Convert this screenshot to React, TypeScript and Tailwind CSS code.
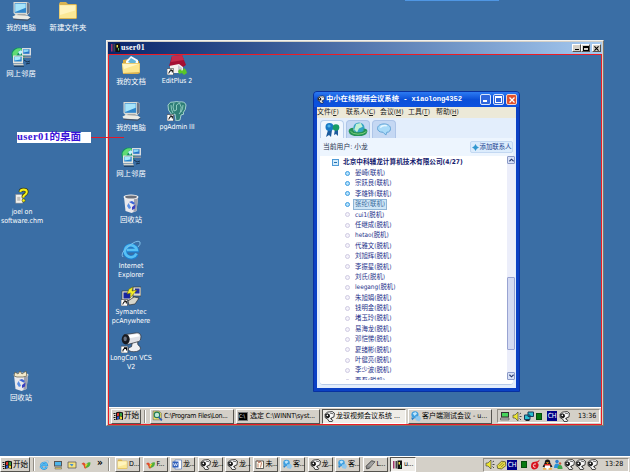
import React from "react";

type P = { className?: string };
type Kids = { children: React.ReactNode };

const Computer = ({ className = "w-[21px] h-5" }: P) => (
  <svg viewBox="0 0 20 20" className={className}>
    <path d="M2 1h13l3 1v10l-2 2H4l-2-2z" fill="#dcdcd4" />
    <path d="M15.500 1.500l2.500 1v9l-2.500 2z" fill="#6f7686" />
    <rect x="3.200" y="2.200" width="11.500" height="9.600" fill="#2f86cc" />
    <path d="M3.700 2.700h10.500v4L3.700 11z" fill="#a5e4fb" />
    <path d="M6 13.500h8l1 2H6z" fill="#77797c" />
    <path d="M1 15.500l3-1.500 12 .5 3 2-3 2-14-1z" fill="#ecebe3" />
    <path d="M2 17.800l14 1 3-2v1l-3 2-14-1z" fill="#4b525f" />
  </svg>
);

const Network = ({ className = "w-5 h-5" }: P) => (
  <svg viewBox="0 0 20 20" className={className}>
    <circle cx="7.500" cy="7.500" r="7" fill="#129063" />
    <path d="M1.500 6c2-5 8-6 10-3.500L8 4 6 8 2 11z" fill="#5fdc74" />
    <path d="M7 5l3-2 2 2-3 3z" fill="#bff3fa" />
    <path d="M11 1h9v7.500h-9z" fill="#d9dde0" />
    <path d="M12.200 2.200h6.300v4.600h-6.300z" fill="#2475c9" />
    <path d="M12.500 2.500h5v2l-5 1z" fill="#8bd7f6" />
    <path d="M12 9.500h8v1.500h-8z" fill="#8c939b" />
    <path d="M2 8.500h10V16H2z" fill="#e5e5df" />
    <path d="M3.200 9.700h7.500v4.800H3.200z" fill="#2785cc" />
    <path d="M3.500 10h6v2.500l-6 1z" fill="#a4e8fb" />
    <path d="M2 16.500h10l1 2H3z" fill="#d5d4ca" />
    <path d="M3 19.200h10M13 13l3 2 3-1M15 17l4-1" stroke="#17324f" strokeWidth="1" fill="none" />
  </svg>
);

const Folder = ({ className = "w-5 h-5" }: P) => (
  <svg viewBox="0 0 20 20" className={className}>
    <path d="M1 3l1-2h6l2 2h8l1 1v13l-1 1H1z" fill="#d9b452" />
    <path d="M1.500 4h16.500v13H1.500z" fill="#fbe896" />
    <path d="M2 4.500h15v5L2 14z" fill="#fff4bd" />
  </svg>
);

const DocsFolder = ({ className = "w-5 h-5" }: P) => (
  <svg viewBox="0 0 20 20" className={className}>
    <path d="M2 5l5-1 2 2h9v12H2z" fill="#d8ab41" />
    <path d="M5 6l5-5 7 4v7H5z" fill="#f7fbff" />
    <path d="M7 7l3-4 5 3-1 4z" fill="#62b4d8" />
    <path d="M1 8h18v10l-2 1H2z" fill="#d8b251" />
    <path d="M1 8.500h17.500V17L2 18z" fill="#fbe68e" />
    <path d="M1.500 9h16L3 14z" fill="#fff6c5" />
  </svg>
);

const Bin = ({ className = "w-5 h-5", full = false }: P & { full?: boolean }) => (
  <svg viewBox="0 0 20 20" className={className}>
    <path d="M3 4l14 1-1.500 13-5 2-6-2z" fill="#e9e9ed" />
    <path d="M13 6l4-1-1.500 13-3 1z" fill="#9ea0ae" />
    <ellipse cx="10" cy="4" rx="7.500" ry="2.500" fill="#f3f3f3" />
    <ellipse cx="10" cy="4" rx="6" ry="1.600" fill="#6a6f7a" />
    {full && <path d="M3 5l1-4 3 2 2-3 2 3 4-3 1 5-4 1H6z" fill="#f2e9cc" stroke="#55523f" strokeWidth=".7" />}
    <path d="M8 9l3-1 3 2-1.500 1.500z" fill="#3a62d8" />
    <path d="M14.500 11.500l-.5 4-3 1.500V14z" fill="#3a3fc0" />
    <path d="M8 16l-2-3 1.500-3 1.500 2.500 1 2.500z" fill="#5a8fe6" />
  </svg>
);

const HelpFile = ({ className = "w-5 h-5" }: P) => (
  <svg viewBox="0 0 20 20" className={className}>
    <path d="M2 8h9v11H2z" fill="#f4f3ee" stroke="#7a7a7a" strokeWidth=".6" />
    <path d="M4 11h4v5H4z" fill="#c2c1bd" />
    <path d="M8 5q0-3 4-3t4 3q0 2-2.500 3.500T12 12" fill="none" stroke="#37370c" strokeWidth="4.400" />
    <path d="M8 5q0-3 4-3t4 3q0 2-2.500 3.500T12 12" fill="none" stroke="#f4f01b" strokeWidth="2.600" />
    <circle cx="12" cy="15.500" r="2" fill="#f4f01b" stroke="#37370c" strokeWidth=".7" />
  </svg>
);

const Shortcut = () => (
  <g>
    <path d="M0 13.500h6.500V20H0z" fill="#fff" stroke="#222" strokeWidth=".5" />
    <path d="M1.800 18.500q0-3 3-3M2.800 15h2.500v2.500" fill="none" stroke="#000" strokeWidth="1" />
  </g>
);

const EditPlus = ({ className = "w-5 h-5" }: P) => (
  <svg viewBox="0 0 20 20" className={className}>
    <path d="M3 9h13v9H3z" fill="#f3f0ee" />
    <path d="M5 1l10-1 4 10-3 2-4-3-10 2z" fill="#a50f33" />
    <path d="M5 1l10-1 2 5-13 2z" fill="#c42b4b" />
    <path d="M11 10l4 3v5h-4z" fill="#c9c9d2" />
    <path d="M11 16l2-2 2 2 2-3 2 2 1 3-3 2-2-2-3 1z" fill="#59c52a" />
    <Shortcut />
  </svg>
);

const Elephant = ({ className = "w-5 h-5" }: P) => (
  <svg viewBox="0 0 20 20" className={className}>
    <path d="M1 4q2-4 6-3 3-1 5 0 6-1 7 3 0 5-3 8l1 1-3 1-1 5-4 1-1-7-3 1Q0 9 1 4z" fill="#2f7f78" stroke="#bfe6de" strokeWidth=".8" />
    <path d="M7 2q-2 4 0 8l2.500-1V4l3-2q3 4 1 9l-1.500 2M4 4q0 5 2 8M16 4q0 4-2 7" fill="none" stroke="#a5dccf" strokeWidth=".8" />
    <Shortcut />
  </svg>
);

const Explorer = ({ className = "w-5 h-5" }: P) => (
  <svg viewBox="0 0 20 20" className={className}>
    <path d="M15.500 14A6 6 0 1 1 16 10.500H6" fill="none" stroke="#1c7fd0" strokeWidth="4.200" />
    <path d="M15.500 13.500A6 6 0 1 1 15.800 10H6" fill="none" stroke="#56c0f5" strokeWidth="2.600" />
    <path d="M2 17Q-1 14 6 7.500 16-1 19 2q1 2-2 5" fill="none" stroke="#7fbde8" strokeWidth="1" />
  </svg>
);

const Symantec = ({ className = "w-5 h-5" }: P) => (
  <svg viewBox="0 0 20 20" className={className}>
    <path d="M1 5h11v9H1z" fill="#e2e2d8" stroke="#333" strokeWidth=".6" />
    <path d="M2.500 6.500h6.500v6H2.500z" fill="#17249f" />
    <path d="M12 1h8v9h-8z" fill="#dadace" stroke="#333" strokeWidth=".6" />
    <path d="M14 2.500h4.500v5H14z" fill="#2531a6" />
    <path d="M8 3l4-2-1 4 5-1-7 8 1-5-4 1z" fill="#f6ef26" stroke="#55540c" strokeWidth=".5" />
    <path d="M7 15l6-4 5 1-4 6-6 1z" fill="#d5d5cb" stroke="#222" strokeWidth=".6" />
    <Shortcut />
  </svg>
);

const Camera = ({ className = "w-[21px] h-[21px]" }: P) => (
  <svg viewBox="0 0 20 20" className={className}>
    <path d="M11 9h5q-1 3 2 5 2 3-3 4.500-6 1-8-1.500-1-2 3-3z" fill="#eff0f3" stroke="#30343c" strokeWidth=".7" />
    <path d="M3 2.500L15 .8q4 0 4 3.700 0 4-2 4.500L6 12z" fill="#dfe1e7" stroke="#30343c" strokeWidth=".7" />
    <path d="M5 3.500l11-1.800 2 2.300L8 6z" fill="#fff" />
    <ellipse cx="4.500" cy="7" rx="3.800" ry="4.800" fill="#181b22" />
    <ellipse cx="4" cy="6.500" rx="1.600" ry="2.200" fill="#6b7280" />
    <Shortcut />
  </svg>
);

const Conference = ({ className = "w-[11px] h-[11px]" }: P) => (
  <svg viewBox="0 0 20 20" className={className}>
    <path d="M2 6l4-4 9-1 4 3-1 7-4 1-1 3 3 2-1 2H9l-2-4-5-3z" fill="#f8f8f8" stroke="#111" strokeWidth="1.400" />
    <path d="M2 6l4-2 4 2 1 4-3 3-5-1z" fill="#151515" />
    <circle cx="6" cy="8" r="1.500" fill="#fff" />
    <path d="M11 4l6 1M11 13l3 2" stroke="#333" strokeWidth="1.300" fill="none" />
  </svg>
);

const Bubbles = ({ className = "w-[11px] h-[11px]" }: P) => (
  <svg viewBox="0 0 20 20" className={className}>
    <circle cx="9" cy="7" r="6.500" fill="#3c9ee0" />
    <path d="M5 4l5-2 3 3-5 4z" fill="#bfe5fb" />
    <path d="M10 10l8-1 2 5-3 5-7-2z" fill="#8ec7ee" />
    <path d="M2 12l6 1-4 4z" fill="#2c7ec4" />
  </svg>
);

const WinFlag = () => (
  <svg viewBox="0 0 20 20" className="w-[11px] h-[10px] shrink-0">
    <path d="M5 3q6-3 14 0v15q-7-3-14 0z" fill="#111" />
    <path d="M7 4.500q2-1 4-1v6q-2 0-4 1z" fill="#e0322a" />
    <path d="M12.500 3.500q2 0 4.500 1v6q-2-1-4.500-1z" fill="#35a341" />
    <path d="M7 11.500q2-1 4-1v5q-2 0-4 1z" fill="#2a55d4" />
    <path d="M12.500 10.500q2 0 4.500 1v5q-2-1-4.500-1z" fill="#f2d52b" />
    <path d="M0 4h4v2H0zM1 8h3v2H1zM0 12h4v2H0zM1 16h3v2H1z" fill="#111" />
  </svg>
);

const Speaker = () => (
  <svg viewBox="0 0 20 20" className="w-[10px] h-[11px]">
    <path d="M2 7h4l6-6v18l-6-6H2z" fill="#ede632" stroke="#333" strokeWidth="1.200" />
    <path d="M15 5l3-2M15 10h4M15 14l3 3" stroke="#222" strokeWidth="1.600" />
  </svg>
);

const GreenBox = () => <div className="w-[6px] h-[7px] bg-[#087a12] border border-[#064d0c]" />;
const Lang = () => <div className="w-[10px] h-[10px] bg-[#000087] text-white text-[7px] leading-[10px] text-center tracking-[-0.4px]">CH</div>;

const PcTray = () => (
  <svg viewBox="0 0 20 20" className="w-[10px] h-[10px]">
    <path d="M2 2h16v11H2z" fill="#333" />
    <path d="M4 4h12v7H4z" fill="#46d45b" />
    <path d="M1 14h17v4H1z" fill="#bbb" stroke="#333" />
  </svg>
);
const Screens = () => (
  <svg viewBox="0 0 20 20" className="w-[10px] h-[10px]">
    <path d="M8 2h11v9H8zM1 8h11v9H1z" fill="#28bfd1" stroke="#153b5c" strokeWidth="2" />
    <path d="M3 19h8" stroke="#222" strokeWidth="2" />
  </svg>
);
const Swirl = () => (
  <svg viewBox="0 0 20 20" className="w-[11px] h-[11px]">
    <path d="M18 1q-2 5-5 6 4 2 2 7-2 5-8 5-6-1-5-8 1-6 7-6 5 0 9-4z" fill="#d8121d" />
    <path d="M11 9q-5-1-5 3t4 3" fill="none" stroke="#f7dada" strokeWidth="1.800" />
  </svg>
);
const Penguin = () => (
  <svg viewBox="0 0 20 20" className="w-[11px] h-[11px]">
    <path d="M10 1q5 0 5 6l4 7-3 1H4l-3-1 4-7q0-6 5-6z" fill="#151515" />
    <ellipse cx="10" cy="14" rx="5" ry="5" fill="#fff" />
    <path d="M4 9h12l-1 3H5z" fill="#e02a20" />
    <path d="M7 6h6l-3 3zM2 17h6v2H2zM12 17h6v2h-6z" fill="#f5a21b" />
  </svg>
);
const Buddy = () => (
  <svg viewBox="0 0 20 20" className="w-[10px] h-[11px]">
    <circle cx="8" cy="4" r="3.500" fill="#2b7bd0" />
    <path d="M2 17q0-9 6-9t6 9z" fill="#2b93d9" />
    <circle cx="14" cy="8" r="2.500" fill="#c95a3a" />
    <path d="M9 19q0-8 5-8t5 8z" fill="#3fa54b" />
  </svg>
);
const Pen = () => (
  <svg viewBox="0 0 20 20" className="w-[11px] h-[11px]">
    <path d="M2 12l8-8 7 1 1 7-8 6-7-1z" fill="#e9e04a" stroke="#55501c" strokeWidth="1.400" />
    <path d="M6 13l7-7M9 15l6-6" stroke="#7c7422" strokeWidth="1.500" />
  </svg>
);
const Swoosh = ({ className = "w-[10px] h-[10px]" }: P) => (
  <svg viewBox="0 0 20 20" className={className}>
    <path d="M1 8q4-6 8 0t2 8q-5 3-5-3-1-5-5-5z" fill="#e04a2c" />
    <path d="M8 13q4-10 11-8 0 8-6 10-3 1-5-2z" fill="#4fae3a" />
    <path d="M8 9l6-2-5 8z" fill="#f3d12f" />
  </svg>
);
const SearchDoc = () => (
  <svg viewBox="0 0 20 20" className="w-[11px] h-[12px] shrink-0">
    <path d="M2 1h11l4 4v12H2z" fill="#f3e36a" stroke="#555" strokeWidth="1" />
    <circle cx="9" cy="8" r="5" fill="#bfe8d9" stroke="#237b55" strokeWidth="2" />
    <path d="M12 12l6 6" stroke="#2a5bb9" strokeWidth="3" />
  </svg>
);
const WordDoc = () => (
  <svg viewBox="0 0 20 20" className="w-[10px] h-[11px] shrink-0">
    <path d="M6 1h13v18H6z" fill="#fff" stroke="#2b54a8" />
    <path d="M1 4h12v12H1z" fill="#2e5fbd" />
    <path d="M3 7l2 6 2-5 2 5 2-6" fill="none" stroke="#fff" strokeWidth="1.400" />
  </svg>
);
const Notes = () => (
  <svg viewBox="0 0 20 20" className="w-[10px] h-[11px] shrink-0">
    <path d="M2 3h15v15H2z" fill="#fffef0" stroke="#333" strokeWidth="1.500" />
    <path d="M5 2l3 5 2-4 3 4-2 9M6 8v8" stroke="#a3432b" strokeWidth="1.400" fill="none" />
  </svg>
);
const Plug = () => (
  <svg viewBox="0 0 20 20" className="w-[11px] h-[11px] shrink-0">
    <path d="M2 13L12 3l6 2-10 12-5 1z" fill="#888" stroke="#333" strokeWidth="1.300" />
    <path d="M6 13l8-8M9 14l7-8" stroke="#ddd" />
  </svg>
);
const Remote = () => (
  <svg viewBox="0 0 20 20" className="w-[11px] h-[10px] shrink-0">
    <path d="M1 2h3v15H1z" fill="#a0346c" />
    <path d="M6 2h3v15H6z" fill="#444" />
    <path d="M10 1h9v17h-9z" fill="#111" />
    <path d="M12 4h3v5h-3z" fill="#e9d84a" />
    <path d="M15 10h2v5h-2z" fill="#53b56a" />
  </svg>
);

function DesktopIcon({ place, label, latin, children }: Kids & { place: string; label: string[]; latin?: boolean }) {
  return (
    <div className={`absolute w-[60px] flex flex-col items-center ${place}`}>
      <div className="h-[22px] flex items-center">{children}</div>
      <div className={`mt-px text-center leading-[9px] text-white whitespace-nowrap ${latin ? "text-[7px] tracking-[-0.05px]" : "text-[7.4px]"}`}>
        {label.map((l) => (
          <div key={l}>{l}</div>
        ))}
      </div>
    </div>
  );
}

const raised = "border border-t-white border-l-white border-r-[#55534e] border-b-[#55534e] bg-[#d4d0c8]";
const pressed = "border border-t-[#55534e] border-l-[#55534e] border-r-white border-b-white bg-[#efede8]";
const sunken = "border border-t-[#918d85] border-l-[#918d85] border-r-white border-b-white";

function StartButton() {
  return (
    <div className={`flex items-center w-[30px] h-[15px] pl-px text-[7.6px] leading-none whitespace-nowrap shrink-0 ${raised}`}>
      <WinFlag />
      <span>开始</span>
    </div>
  );
}

function Task({ icon, label, active, size }: { icon: React.ReactNode; label: string; active?: boolean; size: string }) {
  return (
    <div className={`flex items-center gap-px h-[15px] pl-px leading-[11px] whitespace-nowrap shrink-0 ${size} ${active ? pressed : raised}`}>
      {icon}
      <span>{label}</span>
    </div>
  );
}

const contacts: [string, boolean][] = [
  ["晏崎(联机)", true],
  ["宗跃良(联机)", true],
  ["李雄锋(联机)", true],
  ["张纶(联机)", true],
  ["cui1(脱机)", false],
  ["任继成(脱机)", false],
  ["hetao(脱机)", false],
  ["代雅文(脱机)", false],
  ["刘旭辉(脱机)", false],
  ["李振星(脱机)", false],
  ["刘氏(脱机)", false],
  ["leegang(脱机)", false],
  ["朱旭娟(脱机)", false],
  ["钱明金(脱机)", false],
  ["堵玉玲(脱机)", false],
  ["易海龙(脱机)", false],
  ["邓恺悌(脱机)", false],
  ["夏绪彬(脱机)", false],
  ["叶健亮(脱机)", false],
  ["李少波(脱机)", false],
  ["曹磊(脱机)", false],
];

const menus: [string, string, string][] = [
  ["文件", "F", "w-[29px]"],
  ["联系人", "C", "w-[34px]"],
  ["会议", "M", "w-[28px]"],
  ["工具", "T", "w-[28px]"],
  ["帮助", "H", "w-[28px]"],
];

function ScrollArrow({ up }: { up?: boolean }) {
  return (
    <div className="w-[8px] h-[8px] shrink-0 bg-[#d8e1f7] border border-[#8c9bc8] rounded-[1px] flex items-center justify-center">
      <svg viewBox="0 0 6 4" className="w-[5px] h-[4px]">
        <path d={up ? "M.5 3.500L3 1l2.500 2.500" : "M.5 .5L3 3 5.500 .5"} fill="none" stroke="#26386e" strokeWidth="1.300" />
      </svg>
    </div>
  );
}

function MeetingWindow() {
  return (
    <div className="absolute left-[313px] top-[91px] w-[207px] h-[301px] bg-[#0b41c4] rounded-t-[4px] flex flex-col px-[3px] pb-[3px] border border-[#0831a0]">
      <div className="-mx-[3px] h-[15px] shrink-0 flex items-center pl-[3px] pr-[2px] rounded-t-[3px] bg-linear-to-b from-[#2d7bf2] via-[#0b4fd8] to-[#0d52e0] text-white font-bold">
        <Conference className="w-[8px] h-[9px] mr-px" />
        <span className="text-[7.3px] whitespace-pre">中小在线视频会议系统</span>
        <span className="text-[7.2px] whitespace-pre font-['Liberation_Mono','Noto_Sans_CJK_SC',monospace] tracking-[-0.12px]"> - xiaolong4352</span>
        <div className="ml-auto flex gap-[2px]">
          <div className="w-[11px] h-[11px] rounded-[2px] border border-[#dbe6fb] bg-[#2f66dd] flex items-end p-[2px]">
            <div className="w-[4px] h-[2px] bg-white" />
          </div>
          <div className="w-[11px] h-[11px] rounded-[2px] border border-[#dbe6fb] bg-[#2f66dd] p-px">
            <div className="w-full h-full border border-t-2 border-white" />
          </div>
          <div className="w-[11px] h-[11px] rounded-[2px] border border-[#f4d6cc] bg-[#e0512c] flex items-center justify-center">
            <svg viewBox="0 0 6 6" className="w-[6px] h-[6px]">
              <path d="M.5 .5l5 5M5.500 .5l-5 5" stroke="#fff" strokeWidth="1.300" />
            </svg>
          </div>
        </div>
      </div>
      <div className="h-[11px] shrink-0 bg-[#ece9d8] flex items-center text-[6.9px] leading-none text-[#222]">
        {menus.map(([name, key, w]) => (
          <div key={name} className={`${w} whitespace-nowrap`}>
            {name}
            <span className="text-[6.5px]">
              (<u>{key}</u>)
            </span>
          </div>
        ))}
      </div>
      <div className="flex-1 min-h-0 bg-[#e3eefc] flex flex-col px-[3px] pb-[3px]">
        <div className="h-[20px] shrink-0 flex items-end gap-[2px] pt-[2px]">
          <div className="w-[24px] h-full rounded-t-[4px] bg-[#f1f7fe] border border-b-0 border-[#b9cfec] flex items-center justify-center">
            <svg viewBox="0 0 16 16" className="w-[16px] h-[16px]">
              <path d="M4 8l-2 7 3-2 2 2 1-7M11 7l-1 6 2-1 2 2v-6" fill="#1c5b9d" />
              <circle cx="5.500" cy="5" r="4" fill="#1979c4" />
              <circle cx="12" cy="5.500" r="3.300" fill="#179c67" />
              <circle cx="5" cy="4" r="1.600" fill="#4fb1e9" />
            </svg>
          </div>
          <div className="w-[24px] h-full rounded-t-[4px] bg-[#c5d8f3] border border-b-0 border-[#aec5e8] flex items-center justify-center">
            <svg viewBox="0 0 20 16" className="w-[20px] h-[15px]">
              <circle cx="11" cy="6.500" r="6" fill="#35a5c4" />
              <path d="M8 2l5-1 2 4-4 2-2 4-3-3z" fill="#c2f0d4" />
              <path d="M0 10q0-4 5-4-1 5 6 5 6 0 5-4 4 0 4 3-1 5-10 5-9 0-10-5z" fill="#249355" />
              <path d="M2 10q2 3 8 3t9-3" stroke="#83d07d" fill="none" />
            </svg>
          </div>
          <div className="w-[24px] h-full rounded-t-[4px] bg-[#c5d8f3] border border-b-0 border-[#aec5e8] flex items-center justify-center">
            <svg viewBox="0 0 16 14" className="w-[16px] h-[13px]">
              <path d="M8 1c4 0 7 2 7 5 0 2-1 4-4 4l-1 3-3-3c-4 0-6-2-6-4 0-3 3-5 7-5z" fill="#a9daf8" stroke="#5b9fd3" />
              <path d="M4 5q2-3 7-2" stroke="#e8f7ff" strokeWidth="1.500" fill="none" />
            </svg>
          </div>
        </div>
        <div className="h-[18px] shrink-0 bg-[#edf5fe] flex items-center justify-between pl-[3px] text-[6.8px] leading-none text-[#26324e]">
          <span>当前用户: 小龙</span>
          <div className="w-[43px] h-[12px] border border-[#c3d8f2] bg-[#dcecfc] rounded-[2px] flex items-center justify-center gap-px whitespace-nowrap text-[6.4px] text-[#1b4391]">
            <svg viewBox="0 0 8 8" className="w-[7px] h-[7px]">
              <path d="M4 0l1.500 2.500L8 4 5.500 5.500 4 8 2.500 5.500 0 4l2.500-1.500z" fill="#3197cf" />
            </svg>
            添加联系人
          </div>
        </div>
        <div className="flex-1 min-h-0 bg-white border-b border-[#b7cbea] rounded-b-[3px] flex pb-[4px]">
          <div className="flex-1 min-w-0 overflow-hidden text-[#25308a] text-[6.4px]">
            <div className="h-[12px] flex items-center gap-[4px] pl-[12px] leading-none font-bold text-[#14206e]">
              <div className="w-[7px] h-[7px] border border-[#4f9bd6] bg-[#d4ecfb] flex items-center justify-center">
                <div className="w-[3px] h-px bg-[#256fae]" />
              </div>
              <span className="text-[6.65px] whitespace-nowrap">北京中科辅龙计算机技术有限公司(4/27)</span>
            </div>
            {contacts.map(([name, online]) => (
              <div key={name} className="h-[10.4px] flex items-center gap-[3px] pl-[25px] leading-none whitespace-nowrap">
                <div className={`w-[5px] h-[5px] rounded-full border shrink-0 ${online ? "border-[#3b9be0] bg-[#b5e2fb]" : "border-[#cfcbe2] bg-[#f4f2fa]"}`} />
                <span className={name.startsWith("张纶") ? "px-px py-px border border-[#8fb5d6] bg-[#cfe6f7] text-[#3a6a9c]" : "px-[2px]"}>{name}</span>
              </div>
            ))}
          </div>
          <div className="w-[8px] mr-[-2px] bg-[#eceefa] flex flex-col">
            <ScrollArrow up />
            <div className="flex-1 flex flex-col">
              <div className="mt-[113px] h-[73px] bg-[#d4daf2] border border-[#98a3d2] rounded-[1px]" />
            </div>
            <ScrollArrow />
          </div>
        </div>
      </div>
    </div>
  );
}

function RemoteWindow() {
  const small = "w-[9px] h-[8px] flex items-center justify-center " + raised;
  return (
    <div className="absolute left-[106px] top-[40px] w-[498px] h-[386px] bg-[#d4d0c8] border border-[#f3f2ee] border-r-[#77756f] border-b-[#77756f] flex flex-col px-px pt-px pb-0">
      <div className="h-[12px] shrink-0 flex items-center pl-[2px] pr-px bg-linear-to-r from-[#0a246a] to-[#a6caf0] text-white">
        <Remote />
        <span className="font-bold text-[8px] leading-none font-['Liberation_Serif','Noto_Sans_CJK_SC',serif] tracking-[0.2px]">user01</span>
        <div className="ml-auto flex items-center">
          <div className={small}><div className="w-[4px] h-px bg-black mt-[3px]" /></div>
          <div className={small}><div className="w-[6px] h-[5px] border border-t-2 border-black" /></div>
          <div className={small + " ml-[2px]"}>
            <svg viewBox="0 0 6 6" className="w-[5px] h-[5px]"><path d="M.5 .5l5 5M5.500 .5l-5 5" stroke="#000" strokeWidth="1.300" /></svg>
          </div>
        </div>
      </div>
      <div className="flex-1 border border-[#ee1c25] bg-[#3a6ea5] flex flex-col justify-end">
        <div className="h-[17px] bg-[#d4d0c8] border-t border-white flex items-center pl-[2px] pr-px text-[7px]">
          <StartButton />
          <div className="w-[2px] h-[13px] ml-[3px] mr-[4px] border-l border-[#918d85] border-r border-r-white" />
          <div className="flex gap-[2px]">
            <Task size="w-[84px] tracking-[-0.3px]" icon={<SearchDoc />} label="C:\Program Files\Lon..." />
            <Task
              size="w-[84px] tracking-[-0.1px]"
              icon={<div className="w-[10px] h-[9px] mr-px shrink-0 bg-black border border-[#777] text-white text-[5px] leading-[6px]">C:\</div>}
              label="选定 C:\WINNT\syst..."
            />
            <Task size="w-[84px]" active icon={<Conference className="w-[11px] h-[11px] shrink-0" />} label="龙驭视频会议系统 ..." />
            <Task size="w-[84px]" icon={<Bubbles className="w-[11px] h-[11px] shrink-0" />} label="客户端测试会议 - u..." />
          </div>
          <div className={`ml-auto w-[103px] h-[14px] flex items-center gap-[2px] pl-[2px] ${sunken}`}>
            <PcTray />
            <Speaker />
            <Screens />
            <GreenBox />
            <div className="w-px" />
            <Lang />
            <Conference />
            <span className="ml-[6px]">13:36</span>
          </div>
        </div>
      </div>
    </div>
  );
}

export default function App() {
  const cam = <Conference className="w-[11px] h-[11px] shrink-0" />;
  const bub = <Bubbles className="w-[10px] h-[11px] shrink-0" />;
  return (
    <div className="relative w-[630px] h-[472px] overflow-hidden bg-[#3a6ea5] flex flex-col justify-end text-black font-['DejaVu_Sans_Condensed','Open_Sans','Noto_Sans_CJK_SC',sans-serif]">
      <div className="absolute left-[405px] top-0 w-[94px] h-px bg-[#4f96e3]" />

      <DesktopIcon place="left-[-9px] top-0" label={["我的电脑"]}><Computer /></DesktopIcon>
      <DesktopIcon place="left-[38px] top-0" label={["新建文件夹"]}><Folder /></DesktopIcon>
      <DesktopIcon place="left-[-9px] top-[46px]" label={["网上邻居"]}><Network /></DesktopIcon>
      <DesktopIcon latin place="left-[-8px] top-[185px]" label={["joel on", "software.chm"]}><HelpFile className="w-[16px] h-[18px]" /></DesktopIcon>
      <DesktopIcon place="left-[-9px] top-[370px]" label={["回收站"]}><Bin full /></DesktopIcon>

      <RemoteWindow />

      <DesktopIcon place="left-[101px] top-[54px]" label={["我的文档"]}><DocsFolder /></DesktopIcon>
      <DesktopIcon latin place="left-[147px] top-[54px]" label={["EditPlus 2"]}><EditPlus /></DesktopIcon>
      <DesktopIcon place="left-[101px] top-[100px]" label={["我的电脑"]}><Computer /></DesktopIcon>
      <DesktopIcon latin place="left-[147px] top-[100px]" label={["pgAdmin III"]}><Elephant /></DesktopIcon>
      <DesktopIcon place="left-[101px] top-[146px]" label={["网上邻居"]}><Network /></DesktopIcon>
      <DesktopIcon place="left-[101px] top-[192px]" label={["回收站"]}><Bin /></DesktopIcon>
      <DesktopIcon latin place="left-[101px] top-[239px]" label={["Internet", "Explorer"]}><Explorer /></DesktopIcon>
      <DesktopIcon latin place="left-[101px] top-[285px]" label={["Symantec", "pcAnywhere"]}><Symantec /></DesktopIcon>
      <DesktopIcon latin place="left-[101px] top-[331px]" label={["LongCon VCS", "V2"]}><Camera /></DesktopIcon>

      <MeetingWindow />

      <div className="absolute left-[17px] top-[132px] w-[107px] flex items-center">
        <div className="w-[74px] h-[11px] shrink-0 bg-white text-[#3a12d8] font-bold text-[10.6px] leading-[10px] whitespace-nowrap font-['Liberation_Serif','Noto_Sans_CJK_SC',serif]">
          <span className="tracking-[0.4px]">user01</span>的桌面
        </div>
        <div className="flex-1 h-px bg-[#e0182a]" />
      </div>

      <div className="h-[16px] bg-[#d4d0c8] border-t border-white flex items-center pr-px text-[7px]">
        <StartButton />
        <div className="w-[2px] h-[13px] ml-[3px] mr-[4px] border-l border-[#918d85] border-r border-r-white" />
        <div className="flex items-center gap-[4px] w-[69px] shrink-0">
          <Explorer className="w-[10px] h-[10px]" />
          <svg viewBox="0 0 20 20" className="w-[10px] h-[10px]">
            <path d="M2 2h16v11H2z" fill="#555" />
            <path d="M4 4h12v7H4z" fill="#4db5ea" />
            <path d="M4 15h13v3H4z" fill="#e6d36a" stroke="#555" />
          </svg>
          <svg viewBox="0 0 20 20" className="w-[10px] h-[10px]">
            <path d="M2 4h16v12H2z" fill="#f6e17b" stroke="#555" strokeWidth="1.500" />
            <path d="M5 8h8l-3 5z" fill="#3f8dd6" />
          </svg>
          <Swoosh />
          <span className="text-[10px] leading-none font-bold mt-[-3px] ml-[2px]">»</span>
        </div>
        <div className="w-[2px] h-[13px] mr-[5px] border-l border-[#918d85] border-r border-r-white" />
        <div className="flex gap-[2.500px] shrink-0">
          <Task size="w-[25px] tracking-[-0.2px]" icon={<Folder className="w-[11px] h-[11px] shrink-0" />} label="D..." />
          <Task size="w-[25px] tracking-[-0.2px]" icon={<Swoosh className="w-[11px] h-[10px] shrink-0" />} label="F..." />
          <Task size="w-[25px] tracking-[-0.4px]" icon={<WordDoc />} label="龙..." />
          <Task size="w-[25px] tracking-[-0.4px]" icon={cam} label="龙..." />
          <Task size="w-[25px] tracking-[-0.4px]" icon={cam} label="龙..." />
          <Task size="w-[25px] tracking-[-0.4px]" icon={<Notes />} label="未..." />
          <Task size="w-[25px] tracking-[-0.4px]" icon={bub} label="客..." />
          <Task size="w-[25px] tracking-[-0.4px]" icon={cam} label="龙..." />
          <Task size="w-[25px] tracking-[-0.4px]" icon={bub} label="客..." />
          <Task size="w-[25px] tracking-[-0.2px]" icon={<Plug />} label="L..." />
          <Task size="w-[26px] tracking-[-0.2px]" active icon={<Remote />} label="u..." />
        </div>
        <div className={`ml-auto w-[146px] h-[14px] flex items-center gap-[0.500px] pl-px ${sunken}`}>
          <Speaker />
          <Pen />
          <Lang />
          <div className="px-[3px]"><GreenBox /></div>
          <Swirl />
          <Penguin />
          <Buddy />
          <Conference />
          <Conference />
          <Conference />
          <span className="ml-[7px]">13:28</span>
        </div>
      </div>
    </div>
  );
}
